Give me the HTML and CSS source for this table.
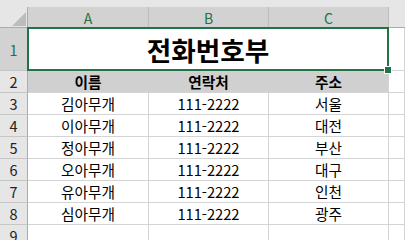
FILE: index.html
```html
<!DOCTYPE html>
<html lang="ko">
<head>
<meta charset="utf-8">
<link rel="stylesheet" href="styles.css">
</head>
<body>
<div class="strip"></div>
<div class="sheet">
  <div class="corner"><svg width="14" height="14" viewBox="0 0 14 14"><polygon points="14,0 14,14 0,14" fill="#bcbcbc"/></svg></div>
  <div class="ch sel">A</div>
  <div class="ch sel">B</div>
  <div class="ch sel">C</div>
  <div class="ch rest"></div>

  <div class="rh sel">1</div>
  <div class="title">전화번호부<div class="selection"><span class="handle"></span></div></div>
  <div class="c"></div>

  <div class="rh">2</div>
  <div class="c hd">이름</div>
  <div class="c hd">연락처</div>
  <div class="c hd last">주소</div>
  <div class="c"></div>

  <div class="rh">3</div><div class="c">김아무개</div><div class="c">111-2222</div><div class="c">서울</div><div class="c"></div>
  <div class="rh">4</div><div class="c">이아무개</div><div class="c">111-2222</div><div class="c">대전</div><div class="c"></div>
  <div class="rh">5</div><div class="c">정아무개</div><div class="c">111-2222</div><div class="c">부산</div><div class="c"></div>
  <div class="rh">6</div><div class="c">오아무개</div><div class="c">111-2222</div><div class="c">대구</div><div class="c"></div>
  <div class="rh">7</div><div class="c">유아무개</div><div class="c">111-2222</div><div class="c">인천</div><div class="c"></div>
  <div class="rh">8</div><div class="c">심아무개</div><div class="c">111-2222</div><div class="c">광주</div><div class="c"></div>
  <div class="rh">9</div><div class="c"></div><div class="c"></div><div class="c"></div><div class="c"></div>
</div>
</body>
</html>
```

FILE: styles.css
```css
html, body {
  margin: 0;
  padding: 0;
  width: 405px;
  height: 240px;
  overflow: hidden;
  background: #fff;
  font-family: "Noto Sans CJK KR", "Noto Sans", sans-serif;
}

.strip {
  height: 7px;
  background: #e6e6e6;
}

.sheet {
  display: grid;
  grid-template-columns: 28px 121px 120px 120px 1fr;
  grid-template-rows: 21px 43px repeat(8, 22px);
}

.sheet > div {
  box-sizing: border-box;
  display: flex;
  align-items: center;
  justify-content: center;
  white-space: nowrap;
}

.corner {
  background: #e6e6e6;
  border-right: 1px solid #ababab;
  border-bottom: 1px solid #ababab;
  justify-content: flex-end !important;
  align-items: flex-end !important;
  padding: 0 1px 1px 0;
}
.corner svg { display: block; }

.ch {
  background: #e6e6e6;
  border-right: 1px solid #bdbdbd;
  border-bottom: 1px solid #ababab;
  font-size: 14px;
  color: #444;
  padding-top: 1px;
}
.ch.sel {
  background: #d2d2d2;
  color: #217346;
}
.ch.rest { border-right: none; }

.rh {
  background: #e6e6e6;
  border-right: 1px solid #ababab;
  border-bottom: 1px solid #c6c6c6;
  font-size: 14.5px;
  color: #222;
}
.rh.sel {
  background: #d2d2d2;
  color: #217346;
}

.c {
  border-right: 1px solid #d4d4d4;
  border-bottom: 1px solid #d4d4d4;
  font-size: 14.67px;
  color: #000;
}

.c.hd {
  background: #d0d0d0;
  border-right-color: #d0d0d0;
  font-weight: bold;
}
.c.hd.last { border-right-color: #d4d4d4; }

.title {
  grid-column: 2 / 5;
  position: relative;
  border-right: 1px solid #d4d4d4;
  border-bottom: 1px solid #d4d4d4;
  font-size: 26.67px;
  font-weight: bold;
  color: #000;
}

.selection {
  position: absolute;
  top: -1px;
  left: -1px;
  right: -1px;
  bottom: -1px;
  border: 2px solid #217346;
}

.handle {
  position: absolute;
  right: -5px;
  bottom: -5px;
  width: 6px;
  height: 6px;
  background: #217346;
  border: 1px solid #fff;
}
```
